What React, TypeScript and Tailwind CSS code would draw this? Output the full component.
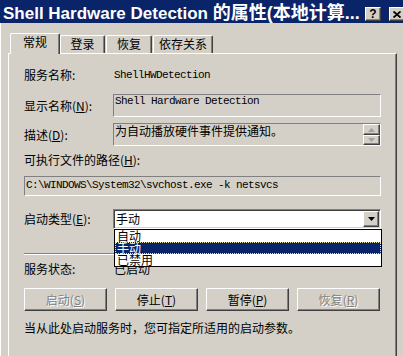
import React from 'react';

const mono = "font-[family-name:'Liberation_Mono',monospace] text-[11px] tracking-[-0.6px]";
const sunken = 'border border-t-[#808080] border-l-[#808080] border-b-white border-r-white';
const raised =
  'border border-t-white border-l-white border-b-[#404040] border-r-[#404040] shadow-[inset_-1px_-1px_0_#808080]';

const Tri = ({ up, color }: { up?: boolean; color: string }) => (
  <svg width="7" height="4" viewBox="0 0 7 4">
    <path d={up ? 'M3.5 0 L7 4 L0 4 Z' : 'M0 0 L7 0 L3.5 4 Z'} fill={color} />
  </svg>
);

const PushButton = ({ label, k, disabled }: { label: string; k: string; disabled?: boolean }) => (
  <div
    className={`w-[83px] h-[23px] flex items-center justify-center bg-[#d4d0c8] ${raised} ${
      disabled ? 'text-[#808080] [text-shadow:1px_1px_0_#fff]' : ''
    }`}
  >
    {label}(<u>{k}</u>)
  </div>
);

export default function App() {
  return (
    <div className="w-[403px] h-[356px] overflow-hidden bg-[#d4d0c8] shadow-[inset_1px_0_0_#fff] font-[family-name:'Noto_Sans_CJK_SC',sans-serif] text-[12px] leading-[16px] text-black">
      {/* title bar */}
      <div className="h-[23px] bg-[#0a246a] flex items-start pl-[3px]">
        <div className="w-[358px] shrink-0 pt-[3px] leading-[20px] text-[17px] font-bold text-white whitespace-nowrap overflow-hidden font-[family-name:'Liberation_Sans','Noto_Sans_CJK_SC',sans-serif]">
          Shell Hardware Detection <span className="text-[18px]">的属性(本地计算...</span>
        </div>
        <div className="mt-[7px] ml-[4px] flex gap-[8px] shrink-0">
          <div className={`w-[16px] h-[14px] bg-[#d4d0c8] ${raised} flex items-center justify-center text-[12px] leading-[12px] font-bold font-[family-name:'Liberation_Sans',sans-serif]`}>
            ?
          </div>
          <div className={`w-[16px] h-[14px] bg-[#d4d0c8] ${raised} flex items-center justify-center`}>
            <svg width="8" height="7" viewBox="0 0 8 7">
              <path d="M0.5 0.5 L7.5 6.5 M7.5 0.5 L0.5 6.5" stroke="#000" strokeWidth="1.8" />
            </svg>
          </div>
        </div>
      </div>

      {/* tabs */}
      <div className="h-[30px] flex items-end pl-[10px]">
        <div className="relative z-10 -mb-px w-[50px] h-[21px] bg-[#d4d0c8] rounded-t-[2px] border-l border-t border-white border-r border-r-[#404040] shadow-[inset_-1px_0_0_#808080] flex justify-center pt-[1px] leading-[14px]">
          常规
        </div>
        <div className="w-[45px] h-[18px] rounded-t-[2px] border-l border-t border-white border-r border-r-[#404040] shadow-[inset_-1px_0_0_#808080] flex justify-center pt-[1px] leading-[14px]">
          登录
        </div>
        <div className="ml-[1px] w-[46px] h-[18px] rounded-t-[2px] border-l border-t border-white border-r border-r-[#404040] shadow-[inset_-1px_0_0_#808080] flex justify-center pt-[1px] leading-[14px]">
          恢复
        </div>
        <div className="ml-[1px] w-[60px] h-[18px] rounded-t-[2px] border-l border-t border-white border-r border-r-[#404040] shadow-[inset_-1px_0_0_#808080] flex justify-center pt-[1px] leading-[14px]">
          依存关系
        </div>
      </div>

      {/* panel */}
      <div className="ml-[8px] w-[389px] h-[320px] border-l border-t border-white border-r border-r-[#404040] shadow-[inset_-1px_0_0_#808080] pl-[15px] pr-[15px] flex flex-col">
        <div className="mt-[13px] h-[16px] flex items-center">
          <span className="w-[89px] shrink-0">服务名称:</span>
          <span className={`${mono} pl-[1px]`}>ShellHWDetection</span>
        </div>

        <div className="mt-[11px] flex items-center">
          <span className="w-[89px] shrink-0">
            显示名称(<u>N</u>):
          </span>
          <div className={`flex-1 h-[23px] ${sunken} pl-[1px] leading-[13px] ${mono}`}>Shell Hardware Detection</div>
        </div>

        <div className="mt-[6px] flex items-center">
          <span className="w-[89px] shrink-0">
            描述(<u>D</u>):
          </span>
          <div className={`flex-1 h-[23px] ${sunken} flex`}>
            <span className="flex-1 pl-[1px] leading-[14px] whitespace-nowrap">为自动播放硬件事件提供通知。</span>
            <div className="w-[17px] flex flex-col">
              <div className={`h-[11px] ${raised} flex items-center justify-center`}>
                <Tri up color="#a0a0a0" />
              </div>
              <div className={`h-[10px] ${raised} flex items-center justify-center`}>
                <Tri color="#a0a0a0" />
              </div>
            </div>
          </div>
        </div>

        <div className="mt-[6px] h-[16px] flex items-center">
          可执行文件的路径(<u>H</u>):
        </div>
        <div className={`mt-[8px] h-[20px] ${sunken} pl-[1px] pt-[1px] leading-[14px] ${mono}`}>
          C:\WINDOWS\System32\svchost.exe -k netsvcs
        </div>

        <div className="mt-[13px] flex items-center">
          <span className="w-[89px] shrink-0">
            启动类型(<u>E</u>):
          </span>
          <div className="relative flex-1">
            <div className={`h-[20px] bg-white ${sunken} shadow-[inset_1px_1px_0_#404040,inset_-1px_-1px_0_#d4d0c8] flex items-center`}>
              <span className="flex-1 pl-[2px] leading-[14px]">手动</span>
              <div className={`w-[16px] h-[16px] mr-[1px] bg-[#d4d0c8] ${raised} flex items-center justify-center`}>
                <Tri color="#000" />
              </div>
            </div>
            <div className="absolute z-20 top-full left-[1px] -right-[1px] bg-white border border-black leading-[12px]">
              <div className="h-[12px] pl-[2px]">自动</div>
              <div className="h-[12px] pl-[2px] bg-[#0a246a] text-white outline-1 outline-dotted outline-[#e8e8c0] -outline-offset-1">
                手动
              </div>
              <div className="h-[12px] pl-[2px]">已禁用</div>
            </div>
          </div>
        </div>

        <div className="mt-[24px] h-[2px] border-t border-[#808080] border-b border-b-white" />

        <div className="mt-[6px] h-[16px] flex items-center">
          <span className="w-[90px] shrink-0">服务状态:</span>
          <span>已启动</span>
        </div>

        <div className="mt-[11px] flex gap-[8px]">
          <PushButton label="启动" k="S" disabled />
          <PushButton label="停止" k="T" />
          <PushButton label="暂停" k="P" />
          <PushButton label="恢复" k="R" disabled />
        </div>

        <div className="mt-[9px] h-[16px] flex items-center whitespace-nowrap">
          当从此处启动服务时，您可指定所适用的启动参数。
        </div>
      </div>
    </div>
  );
}
